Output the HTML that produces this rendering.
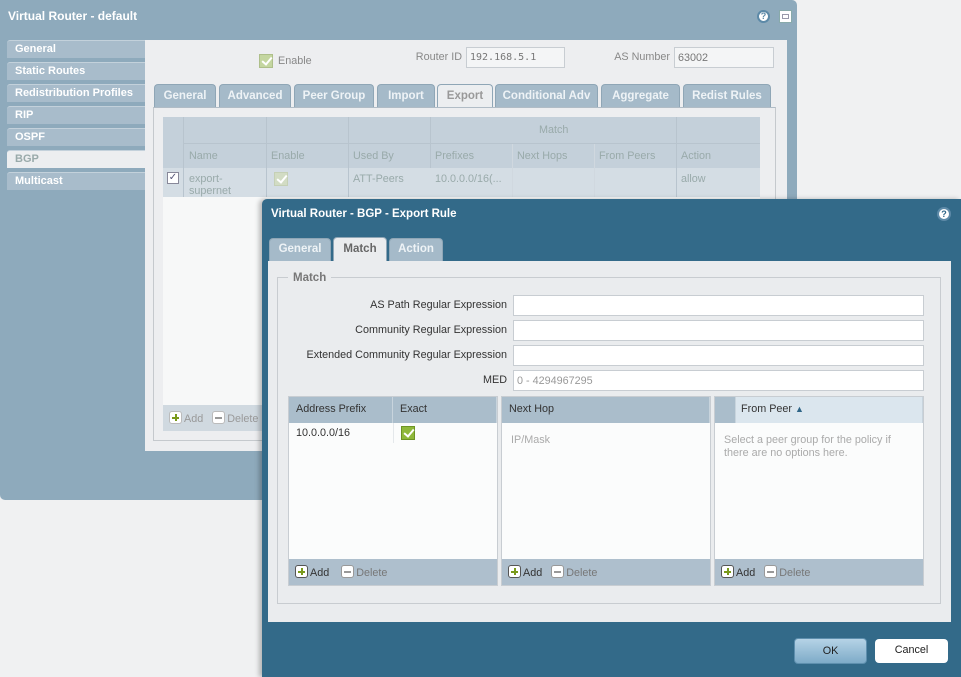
<!DOCTYPE html>
<html><head><meta charset="utf-8"><style>
*{box-sizing:border-box;margin:0;padding:0}
body{width:961px;height:677px;overflow:hidden;background:#f0f1f2;font-family:"Liberation Sans","DejaVu Sans",sans-serif;font-size:10.8px;color:#333;position:relative}
.a{position:absolute}
.b{font-weight:bold}
.nav{position:absolute;left:7px;width:138px;height:18px;background:#a8bccb;color:#fff;font-weight:bold;font-size:11px;padding:2px 0 0 8px;border-top:1px solid #c3d1db;border-radius:3px 0 0 0}
.tab{position:absolute;top:84px;height:23px;background:#a5bac9;color:#eef3f6;font-weight:bold;font-size:11.5px;text-align:center;padding-top:5px;border:1px solid #8fa6b6;border-bottom:none;border-radius:4px 4px 0 0}
.inp{position:absolute;background:#fff;border:1px solid #c8cdd2}
.gh{position:absolute;background:#aabdcb;color:#333;padding:6px 0 0 7px;border-right:1px solid #c8d4dd;height:26px}
.ic{display:inline-block;width:13px;height:13px;border:1px solid #555;border-radius:3px;background:#fff;vertical-align:-2px;position:relative;margin-right:2px}
.ic.p::before{content:"";position:absolute;left:2px;top:5px;width:7px;height:2px;background:#7a9a1a}
.ic.p::after{content:"";position:absolute;left:5px;top:2px;width:2px;height:7px;background:#7a9a1a}
.ic.m{border-color:#999}
.ic.m::before{content:"";position:absolute;left:2px;top:5px;width:7px;height:2px;background:#999}
.chk{position:absolute;width:14px;height:14px;background:#8fb83a;border:1px solid #6d9424}
.chk::after{content:"";position:absolute;left:4px;top:0px;width:4px;height:8px;border:solid #fff;border-width:0 2px 2px 0;transform:rotate(40deg)}
</style></head><body>
<div class="a" style="left:0;top:0;width:797px;height:500px;background:#8eaabc;border-radius:0 5px 5px 5px"></div>
<div class="a b" style="left:8px;top:9px;color:#fff;font-size:12px">Virtual Router - default</div>
<div class="a" style="left:757px;top:10px;width:13px;height:13px;border-radius:50%;background:#fff;border:2px solid #5d8aa8;font-size:9px;color:#5d8aa8;text-align:center;line-height:9px;font-weight:bold">?</div>
<div class="a" style="left:779px;top:10px;width:13px;height:13px;background:#fff;border:1px solid #8aa;"><div style="margin:3px 2px;height:5px;border:1px solid #99a"></div></div>
<div class="nav" style="top:40px">General</div>
<div class="nav" style="top:62px">Static Routes</div>
<div class="nav" style="top:84px">Redistribution Profiles</div>
<div class="nav" style="top:106px">RIP</div>
<div class="nav" style="top:128px">OSPF</div>
<div class="nav" style="top:150px;background:#eceef0;color:#9aa">BGP</div>
<div class="nav" style="top:172px">Multicast</div>
<div class="a" style="left:145px;top:40px;width:642px;height:411px;background:#edeef0"></div>
<div class="chk" style="left:259px;top:54px;background:#c4d6a0;border-color:#aebf8a"></div>
<div class="a" style="left:278px;top:55px;color:#888">Enable</div>
<div class="a" style="left:400px;top:51px;width:62px;text-align:right;color:#888">Router ID</div>
<div class="inp" style="left:466px;top:47px;width:99px;height:21px;background:#f4f5f6;padding:4px 3px;color:#777;font-family:'DejaVu Sans Mono',monospace;font-size:10px">192.168.5.1</div>
<div class="a" style="left:600px;top:51px;width:70px;text-align:right;color:#888">AS Number</div>
<div class="inp" style="left:674px;top:47px;width:100px;height:21px;background:#f4f5f6;padding:4px 3px;color:#777">63002</div>
<div class="tab" style="left:154px;width:62px">General</div>
<div class="tab" style="left:219px;width:72px">Advanced</div>
<div class="tab" style="left:294px;width:80px">Peer Group</div>
<div class="tab" style="left:377px;width:58px">Import</div>
<div class="tab" style="left:437px;width:56px;background:#eceef0;color:#999;height:24px">Export</div>
<div class="tab" style="left:495px;width:103px">Conditional Adv</div>
<div class="tab" style="left:601px;width:79px">Aggregate</div>
<div class="tab" style="left:683px;width:88px">Redist Rules</div>
<div class="a" style="left:153px;top:107px;width:623px;height:334px;border:1px solid #c5c9cd;border-top:1px solid #b0bcc6"></div>
<div class="a" style="left:163px;top:117px;width:597px;height:288px;background:#f7f8f8"></div>
<div class="a" style="left:163px;top:117px;width:597px;height:51px;background:#c4d0da"></div>
<div class="a" style="left:163px;top:168px;width:597px;height:29px;background:#d4dde4"></div>
<div class="a" style="left:163px;top:117px;width:21px;height:80px;border-right:1px solid #b8c4ce"></div>
<div class="a" style="left:266px;top:117px;width:1px;height:80px;background:#b8c4ce"></div>
<div class="a" style="left:348px;top:117px;width:1px;height:80px;background:#b8c4ce"></div>
<div class="a" style="left:430px;top:117px;width:1px;height:51px;background:#b8c4ce"></div>
<div class="a" style="left:512px;top:143px;width:1px;height:54px;background:#d0d8df"></div>
<div class="a" style="left:594px;top:143px;width:1px;height:54px;background:#d0d8df"></div>
<div class="a" style="left:676px;top:117px;width:1px;height:80px;background:#b8c4ce"></div>
<div class="a" style="left:184px;top:143px;width:576px;height:1px;background:#b8c4ce"></div>
<div class="a" style="left:539px;top:124px;color:#9aa">Match</div>
<div class="a" style="left:189px;top:150px;color:#9aa">Name</div>
<div class="a" style="left:271px;top:150px;color:#9aa">Enable</div>
<div class="a" style="left:353px;top:150px;color:#9aa">Used By</div>
<div class="a" style="left:435px;top:150px;color:#9aa">Prefixes</div>
<div class="a" style="left:517px;top:150px;color:#9aa">Next Hops</div>
<div class="a" style="left:599px;top:150px;color:#9aa">From Peers</div>
<div class="a" style="left:681px;top:150px;color:#9aa">Action</div>
<div class="a" style="left:167px;top:172px;width:12px;height:12px;border:1px solid #889;background:#fff;color:#557;font-size:10px;line-height:10px;text-align:center">✓</div>
<div class="a" style="left:189px;top:173px;color:#9aa;line-height:12px">export-<br>supernet</div>
<div class="chk" style="left:274px;top:172px;background:#d2dcc4;border-color:#c5d0b5"></div>
<div class="a" style="left:353px;top:173px;color:#9aa">ATT-Peers</div>
<div class="a" style="left:435px;top:173px;color:#9aa">10.0.0.0/16(...</div>
<div class="a" style="left:681px;top:173px;color:#9aa">allow</div>
<div class="a" style="left:163px;top:405px;width:597px;height:26px;background:#d0d9e0"></div>
<div class="a" style="left:169px;top:411px;color:#999"><span class="ic p" style="border-color:#bbb"></span>Add &nbsp; <span class="ic m" style="border-color:#bbb"></span>Delete</div>

<div class="a" style="left:262px;top:199px;width:699px;height:478px;background:#336a89;border-radius:5px 0 0 0;box-shadow:-3px 0 5px rgba(0,0,0,.25)"></div>
<div class="a b" style="left:271px;top:208px;color:#fff;font-size:11.5px">Virtual Router - BGP - Export Rule</div>
<div class="a" style="left:937px;top:207px;width:14px;height:14px;border-radius:50%;background:#fff;border:2px solid #5d8aa8;font-size:9px;color:#2e6587;text-align:center;line-height:10px;font-weight:bold">?</div>
<div class="tab" style="left:269px;top:238px;width:62px;height:23px;padding-top:4px">General</div>
<div class="tab" style="left:333px;top:237px;width:54px;height:24px;padding-top:5px;background:#eaecee;color:#666">Match</div>
<div class="tab" style="left:389px;top:238px;width:54px;height:23px;padding-top:4px">Action</div>
<div class="a" style="left:268px;top:261px;width:683px;height:361px;background:#eaecee"></div>
<div class="a" style="left:277px;top:277px;width:664px;height:327px;border:1px solid #c8ccd0"></div>
<div class="a b" style="left:288px;top:272px;padding:0 5px;background:#eaecee;color:#777;font-size:11.5px">Match</div>
<div class="a" style="left:280px;top:299px;width:227px;text-align:right">AS Path Regular Expression</div>
<div class="a" style="left:280px;top:324px;width:227px;text-align:right">Community Regular Expression</div>
<div class="a" style="left:280px;top:349px;width:227px;text-align:right">Extended Community Regular Expression</div>
<div class="a" style="left:280px;top:374px;width:227px;text-align:right">MED</div>
<div class="inp" style="left:513px;top:295px;width:411px;height:21px"></div>
<div class="inp" style="left:513px;top:320px;width:411px;height:21px"></div>
<div class="inp" style="left:513px;top:345px;width:411px;height:21px"></div>
<div class="inp" style="left:513px;top:370px;width:411px;height:21px;color:#999;padding:4px 3px">0 - 4294967295</div>
<div class="a" style="left:288px;top:396px;width:210px;height:190px;background:#fbfcfc;border:1px solid #c8cdd2"></div>
<div class="gh" style="left:289px;top:397px;width:104px">Address Prefix</div>
<div class="gh" style="left:393px;top:397px;width:104px">Exact</div>
<div class="a" style="left:296px;top:427px">10.0.0.0/16</div>
<div class="a" style="left:393px;top:423px;width:1px;height:20px;background:#e4e8eb"></div>
<div class="chk" style="left:401px;top:426px"></div>
<div class="a" style="left:289px;top:559px;width:208px;height:26px;background:#aebfcd;padding:6px 0 0 6px"><span class="ic p"></span>Add &nbsp;&nbsp; <span style="color:#777"><span class="ic m"></span>Delete</span></div>
<div class="a" style="left:501px;top:396px;width:210px;height:190px;background:#fbfcfc;border:1px solid #c8cdd2"></div>
<div class="gh" style="left:502px;top:397px;width:208px">Next Hop</div>
<div class="a" style="left:511px;top:434px;color:#aaa">IP/Mask</div>
<div class="a" style="left:502px;top:559px;width:208px;height:26px;background:#aebfcd;padding:6px 0 0 6px"><span class="ic p"></span>Add &nbsp; <span style="color:#777"><span class="ic m"></span>Delete</span></div>
<div class="a" style="left:714px;top:396px;width:210px;height:190px;background:#fbfcfc;border:1px solid #c8cdd2"></div>
<div class="gh" style="left:715px;top:397px;width:21px"></div>
<div class="gh" style="left:736px;top:397px;width:187px;background:#dbe6ee;padding-left:5px">From Peer <span style="font-size:9px;color:#2e6587">▲</span></div>
<div class="a" style="left:724px;top:434px;color:#aaa;line-height:13px">Select a peer group for the policy if<br>there are no options here.</div>
<div class="a" style="left:715px;top:559px;width:208px;height:26px;background:#aebfcd;padding:6px 0 0 6px"><span class="ic p"></span>Add &nbsp; <span style="color:#777"><span class="ic m"></span>Delete</span></div>
<div class="a" style="left:794px;top:638px;width:73px;height:26px;border-radius:4px;background:linear-gradient(#b5d3e6,#7eabc8);border:1px solid #5e8fae;text-align:center;padding-top:6px;color:#222">OK</div>
<div class="a" style="left:875px;top:639px;width:73px;height:24px;border-radius:4px;background:#fff;text-align:center;padding-top:5px;color:#222">Cancel</div>
</body></html>
